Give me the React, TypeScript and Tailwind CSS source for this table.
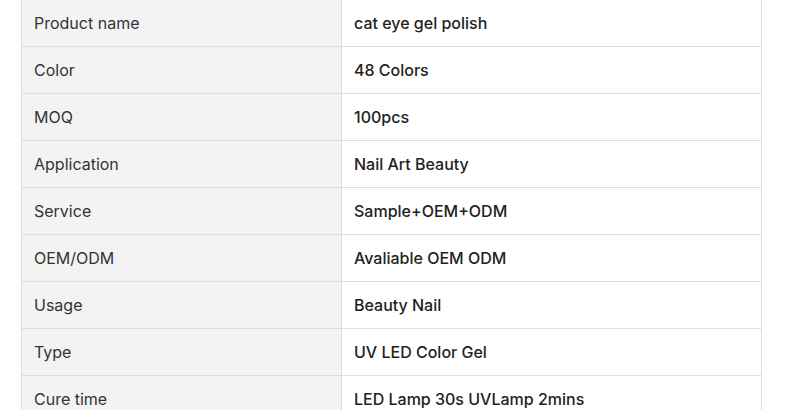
import React from 'react';

// Product spec rows, label / value
const specs: [string, string][] = [
    ['Product name', 'cat eye gel polish'],
    ['Color', '48 Colors'],
    ['MOQ', '100pcs'],
    ['Application', 'Nail Art Beauty'],
    ['Service', 'Sample+OEM+ODM'],
    ['OEM/ODM', 'Avaliable OEM ODM'],
    ['Usage', 'Beauty Nail'],
    ['Type', 'UV LED Color Gel'],
    ['Cure time', 'LED Lamp 30s UVLamp 2mins'],
];

const App: React.FC = () => {
    return (
        <div className="w-[799px] h-[410px] overflow-hidden bg-white font-['Inter',sans-serif]">
            <table className="ml-[21px] mt-[-1px] w-[741px] border-collapse table-fixed text-[16px]">
                <tbody>
                    {specs.map(([label, value]) => (
                        <tr key={label} className="h-[47px]">
                            <td className="w-[320px] border border-[#dddddd] bg-[#f3f3f3] pl-3 text-[#333333]">
                                {label}
                            </td>
                            <td className="border border-[#dddddd] bg-white pl-3 font-[450] text-[#222222]">
                                {value}
                            </td>
                        </tr>
                    ))}
                </tbody>
            </table>
        </div>
    );
};

export default App;
